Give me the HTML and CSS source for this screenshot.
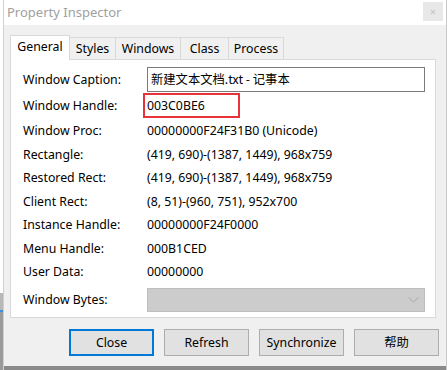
FILE: index.html
```html
<!DOCTYPE html>
<html>
<head>
<meta charset="utf-8">
<link rel="stylesheet" href="styles.css">
</head>
<body>
<div class="desk">
  <div class="behind"></div>
  <div class="dialog">
    <div class="titlebar">
      <span class="title">Property Inspector</span>
      <span class="close">×</span>
    </div>
    <div class="client">
      <div class="tabs">
        <div class="tab active t-general">General</div>
        <div class="tab t-styles">Styles</div>
        <div class="tab t-windows">Windows</div>
        <div class="tab t-class">Class</div>
        <div class="tab t-process">Process</div>
      </div>
      <div class="panel">
        <div class="row first">
          <span class="label">Window Caption:</span>
          <div class="edit">新建文本文档.txt - 记事本</div>
        </div>
        <div class="row handle">
          <span class="label">Window Handle:</span>
          <span class="value"><span class="mark">003C0BE6</span></span>
        </div>
        <div class="row"><span class="label">Window Proc:</span><span class="value">00000000F24F31B0 (Unicode)</span></div>
        <div class="row"><span class="label">Rectangle:</span><span class="value">(419, 690)-(1387, 1449), 968x759</span></div>
        <div class="row"><span class="label">Restored Rect:</span><span class="value">(419, 690)-(1387, 1449), 968x759</span></div>
        <div class="row"><span class="label">Client Rect:</span><span class="value">(8, 51)-(960, 751), 952x700</span></div>
        <div class="row"><span class="label">Instance Handle:</span><span class="value">00000000F24F0000</span></div>
        <div class="row"><span class="label">Menu Handle:</span><span class="value">000B1CED</span></div>
        <div class="row"><span class="label">User Data:</span><span class="value">00000000</span></div>
        <div class="row bytes">
          <span class="label">Window Bytes:</span>
          <div class="combo">
            <svg class="chev" width="11" height="6" viewBox="0 0 11 6"><path d="M0.5 0.5 L5.5 5 L10.5 0.5" fill="none" stroke="#a8a8a8" stroke-width="1"/></svg>
          </div>
        </div>
      </div>
      <div class="buttons">
        <div class="btn default">Close</div>
        <div class="btn">Refresh</div>
        <div class="btn">Synchronize</div>
        <div class="btn cjk">帮助</div>
      </div>
    </div>
    <div class="shadow"></div>
  </div>
</div>
</body>
</html>
```
FILE: styles.css
```css
html, body {
  margin: 0;
  padding: 0;
}
body {
  width: 448px;
  height: 370px;
  overflow: hidden;
  background: #ffffff;
  font-family: "Noto Sans", "Noto Sans CJK SC", sans-serif;
  font-size: 12.3px;
  color: #000;
}
.desk {
  display: flex;
  height: 370px;
}
.behind {
  width: 3px;
  flex: none;
  background: linear-gradient(to bottom, #ffffff 0, #ffffff 293px, #b8b8b8 293px, #b8b8b8 310px, #3c8fd8 310px, #3c8fd8 312px, #9a9a9a 312px);
}
.dialog {
  width: 444px;
  flex: none;
  display: flex;
  flex-direction: column;
  border-left: 1px solid #d0d0d0;
  border-right: 1px solid #c8c8c8;
  box-sizing: border-box;
}
.titlebar {
  height: 25px;
  background: #ffffff;
  display: flex;
  align-items: center;
  justify-content: space-between;
  padding-left: 3px;
  padding-right: 3px;
  flex: none;
}
.title {
  font-family: "Noto Sans", sans-serif;
  font-size: 13px;
  color: #a0a0a0;
  margin-top: -1px;
}
.close {
  width: 20px;
  height: 19px;
  background: #e8e8e8;
  color: #c4c4c4;
  font-size: 11px;
  display: flex;
  align-items: center;
  justify-content: center;
  margin-top: -2px;
}
.client {
  background: #f0f0f0;
  flex: 1;
  padding: 10px 0 0 6px;
  display: flex;
  flex-direction: column;
}
.tabs {
  display: flex;
  align-items: flex-end;
  height: 24px;
  position: relative;
  z-index: 1;
}
.tab {
  height: 22px;
  box-sizing: border-box;
  border: 1px solid #d9d9d9;
  border-bottom: none;
  border-left: none;
  background: #f0f0f0;
  text-align: center;
  line-height: 22px;
}
.tab.active {
  height: 25px;
  background: #ffffff;
  border-left: 1px solid #d9d9d9;
  line-height: 21px;
  margin-bottom: -1px;
}
.t-general { width: 60px; }
.t-styles { width: 46px; }
.t-windows { width: 65px; }
.t-class { width: 48px; }
.t-process { width: 55px; }
.panel {
  width: 426px;
  height: 259px;
  box-sizing: border-box;
  background: #ffffff;
  border: 1px solid #d9d9d9;
  padding: 6px 10px 0 12px;
  display: flex;
  flex-direction: column;
}
.row {
  display: flex;
  align-items: center;
  height: 23.5px;
}
.row.first {
  height: 26px;
}
.row.handle {
  height: 27px;
}
.label {
  width: 124px;
  flex: none;
}
.value {
  white-space: nowrap;
}
.edit {
  width: 279px;
  height: 25px;
  box-sizing: border-box;
  border: 1px solid #7a7a7a;
  padding-left: 3px;
  line-height: 22px;
  font-family: "Noto Sans CJK SC", "Noto Sans", sans-serif;
}
.mark {
  display: inline-block;
  margin-left: -4px;
  width: 97px;
  height: 25px;
  box-sizing: border-box;
  border: 2px solid #e8333a;
  padding-left: 2px;
  line-height: 21px;
}
.row.bytes {
  height: 28px;
  margin-top: 2px;
}
.combo {
  width: 278px;
  height: 24px;
  box-sizing: border-box;
  background: #cccccc;
  border: 1px solid #bfbfbf;
  display: flex;
  align-items: center;
  justify-content: flex-end;
  padding-right: 5px;
}
.buttons {
  display: flex;
  gap: 10px;
  padding-left: 59px;
  margin-top: 11px;
}
.btn {
  width: 85px;
  height: 27px;
  box-sizing: border-box;
  background: #e1e1e1;
  border: 1px solid #adadad;
  display: flex;
  align-items: center;
  justify-content: center;
  padding-bottom: 1px;
}
.btn.default {
  border: 2px solid #0078d7;
}
.btn.cjk {
  font-family: "Noto Sans CJK SC", sans-serif;
}
.shadow {
  height: 4px;
  background: #8a8a8a;
  flex: none;
}
```
